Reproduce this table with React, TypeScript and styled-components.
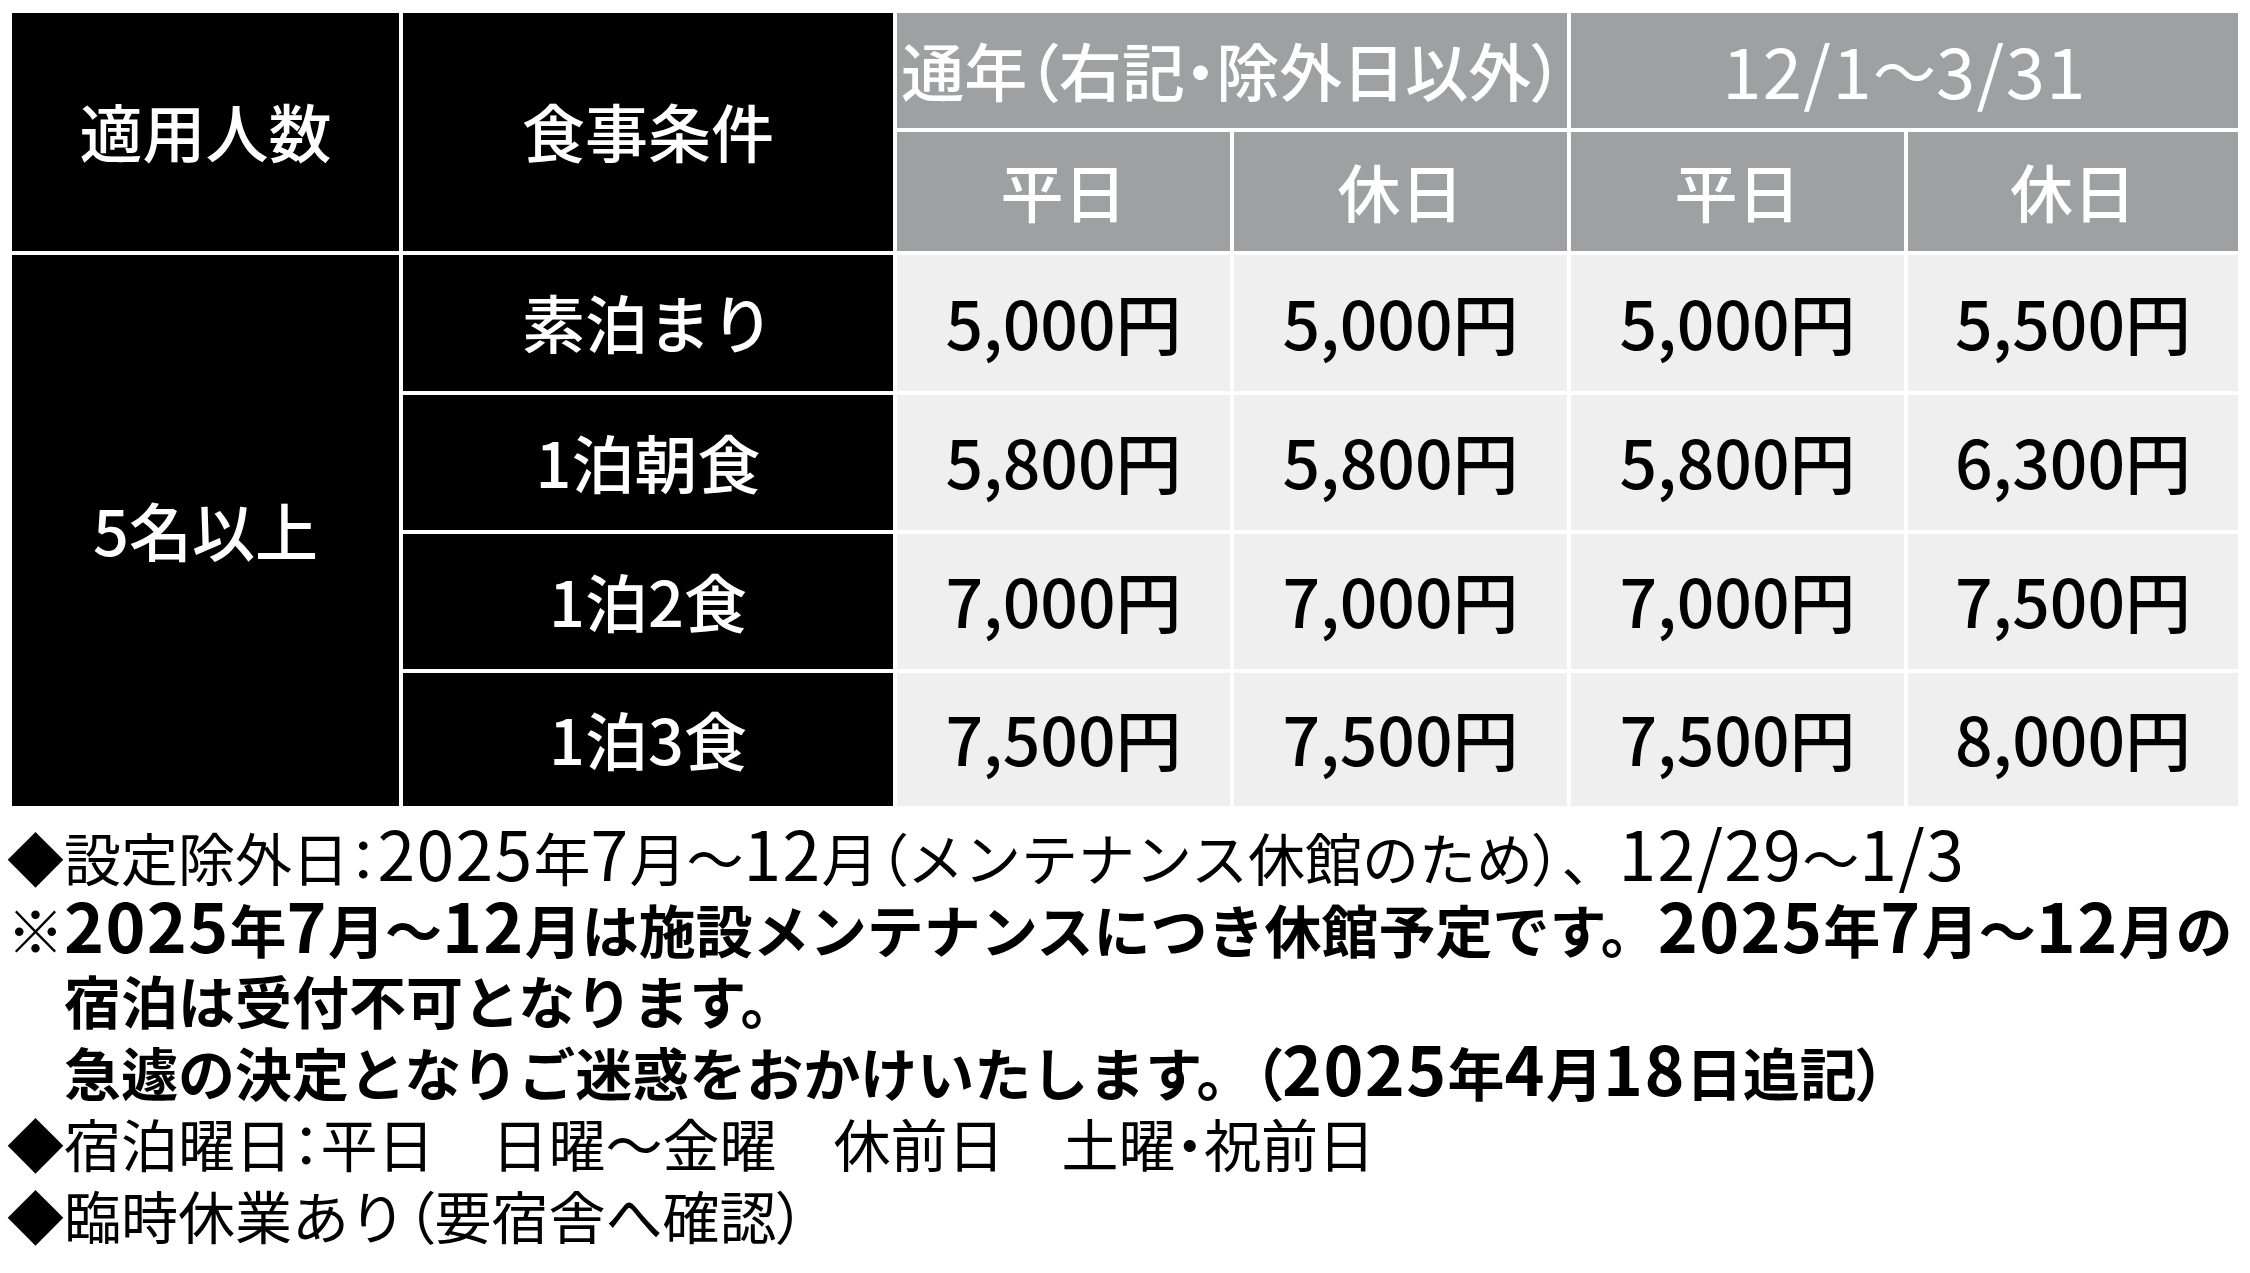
import React from "react";
import styled, { createGlobalStyle } from "styled-components";

const GlobalStyle = createGlobalStyle`
  html, body {
    margin: 0;
    padding: 0;
    background: #fff;
  }
  body {
    font-family: "Noto Sans CJK JP", "Noto Sans", sans-serif;
    color: #000;
  }
`;

type Tone = "dark" | "gray" | "light";

const toneBg: Record<Tone, string> = {
  dark: "#000000",
  gray: "#9fa0a2",
  light: "#efefef",
};

// digits in the original face are larger than Noto's latin
const Num = styled.span<{ $scale?: number }>`
  font-size: ${(p) => p.$scale ?? 1.19}em;
  letter-spacing: 0.02em;
  line-height: 0;
`;

// brackets, colon and middle dot are set proportionally
const Narrow = styled.span`
  font-feature-settings: "palt";
`;

const rich = (text: string, scale?: number) =>
  text.split(/([0-9][0-9,/]*|[（）：・])/).map((part, i) => {
    if (!part) return null;
    if (/^[0-9]/.test(part))
      return (
        <Num key={i} $scale={scale}>
          {part}
        </Num>
      );
    if (/^[（）：・]$/.test(part)) return <Narrow key={i}>{part}</Narrow>;
    return <React.Fragment key={i}>{part}</React.Fragment>;
  });

const Page = styled.div`
  width: 2250px;
  box-sizing: border-box;
  padding: 13px 12px 0 12px;
`;

const PriceGrid = styled.div`
  display: grid;
  grid-template-columns: 387px 490px 333px 333px 333px 1fr;
  grid-template-rows: 115px 119px 136px 135px 135px 133px;
  gap: 4px;
  background: #fff;
`;

const Cell = styled.div<{ $tone: Tone; $area?: string; $light?: boolean }>`
  display: flex;
  align-items: center;
  justify-content: center;
  box-sizing: border-box;
  padding-bottom: 5px;
  background: ${(p) => toneBg[p.$tone]};
  color: ${(p) => (p.$tone === "light" ? "#000" : "#fff")};
  font-size: 63px;
  font-weight: ${(p) => (p.$light ? 400 : 500)};
  line-height: 1;
  white-space: nowrap;
  grid-area: ${(p) => p.$area ?? "auto"};
`;

const Price = styled(Cell)`
  font-size: 66px;
`;

const Notes = styled.div`
  margin: 15px 0 0 -5px;
`;

const Line = styled.p<{ $bold?: boolean }>`
  margin: 0;
  font-size: 57px;
  font-weight: ${(p) => (p.$bold ? 700 : 400)};
  line-height: 71.5px;
  white-space: pre;
`;

const Hanging = styled(Line)`
  padding-left: 1em;
  text-indent: -1em;
`;

const meals = [
  { label: "素泊まり", prices: ["5,000円", "5,000円", "5,000円", "5,500円"] },
  { label: "1泊朝食", prices: ["5,800円", "5,800円", "5,800円", "6,300円"] },
  { label: "1泊2食", prices: ["7,000円", "7,000円", "7,000円", "7,500円"] },
  { label: "1泊3食", prices: ["7,500円", "7,500円", "7,500円", "8,000円"] },
];

const dayTypes = ["平日", "休日", "平日", "休日"];

export default function App() {
  return (
    <Page>
      <GlobalStyle />
      <PriceGrid>
        <Cell $tone="dark" $area="1 / 1 / 3 / 2">
          適用人数
        </Cell>
        <Cell $tone="dark" $area="1 / 2 / 3 / 3">
          食事条件
        </Cell>
        <Cell $tone="gray" $area="1 / 3 / 2 / 5">
          {rich("通年（右記・除外日以外）")}
        </Cell>
        <Cell $tone="gray" $area="1 / 5 / 2 / 7" $light>
          {rich("12/1～3/31", 1.12)}
        </Cell>
        {dayTypes.map((d, i) => (
          <Cell key={i} $tone="gray">
            {d}
          </Cell>
        ))}

        <Cell $tone="dark" $area="3 / 1 / 7 / 2">
          5名以上
        </Cell>
        {meals.map((m) => (
          <React.Fragment key={m.label}>
            <Cell $tone="dark">{m.label}</Cell>
            {m.prices.map((p, i) => (
              <Price key={i} $tone="light">
                {p}
              </Price>
            ))}
          </React.Fragment>
        ))}
      </PriceGrid>

      <Notes>
        <Line>{rich("◆設定除外日：2025年7月～12月（メンテナンス休館のため）、12/29～1/3")}</Line>
        <Hanging $bold>
          {rich("※2025年7月～12月は施設メンテナンスにつき休館予定です。2025年7月～12月の")}
          <br />
          宿泊は受付不可となります。
          <br />
          {rich("急遽の決定となりご迷惑をおかけいたします。（2025年4月18日追記）")}
        </Hanging>
        <Line>{rich("◆宿泊曜日：平日　日曜～金曜　休前日　土曜・祝前日")}</Line>
        <Line>{rich("◆臨時休業あり（要宿舎へ確認）")}</Line>
      </Notes>
    </Page>
  );
}
